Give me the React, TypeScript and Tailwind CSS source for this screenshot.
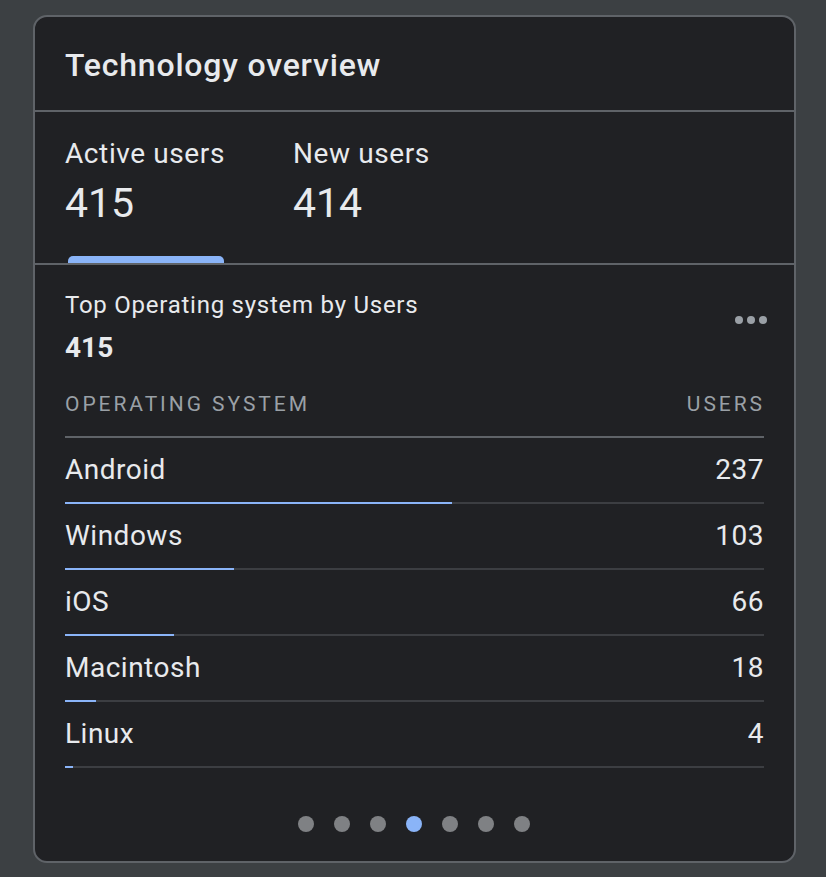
import { memo } from 'react';

const rows = [
    { name: 'Android', users: 237, pct: 55.3 },
    { name: 'Windows', users: 103, pct: 24.2 },
    { name: 'iOS', users: 66, pct: 15.6 },
    { name: 'Macintosh', users: 18, pct: 4.4 },
    { name: 'Linux', users: 4, pct: 1.1 },
];

const font = { fontFamily: 'Roboto, "Noto Sans", sans-serif' };

/**
 * One operating system row with its share bar underneath
 */
const OsRow = memo(function OsRow({ name, users, pct }: { name: string; users: number; pct: number }) {
    return (
        <div className="flex flex-col">
            <div className="flex h-[64px] items-center justify-between text-[28px] tracking-[0.5px] text-[#e8eaed]">
                <span>{name}</span>
                <span>{users}</span>
            </div>
            <div className="relative h-[2px] bg-[#3c3e42]">
                <div className="absolute left-0 top-0 h-[2px] bg-[#8ab4f8]" style={{ width: `${pct}%` }} />
            </div>
        </div>
    );
});

export default function App() {
    return (
        <div className="min-h-[877px] bg-[#3c4043] pl-[33px] pt-[15px]" style={font}>
            <div className="flex h-[848px] w-[763px] flex-col rounded-[14px] border-2 border-[#5f6368] bg-[#202124]">
                {/* Title */}
                <div className="flex h-[93px] items-center px-[30px] pt-[2px] text-[32px] font-medium tracking-[0.8px] text-[#e8eaed]">
                    Technology overview
                </div>
                <div className="h-[2px] bg-[#5f6368]" />

                {/* Metric tabs */}
                <div className="flex h-[151px] gap-[68px] px-[30px]">
                    <div className="flex flex-col">
                        <div className="pt-[25px] text-[28px] leading-[34px] tracking-[0.6px] text-[#e8eaed]">Active users</div>
                        <div className="pt-[10px] text-[41px] leading-[44px] text-[#e8eaed]">415</div>
                        <div className="mt-auto ml-[3px] h-[7px] w-[156px] rounded-t-[5px] bg-[#8ab4f8]" />
                    </div>
                    <div className="flex flex-col">
                        <div className="pt-[25px] text-[28px] leading-[34px] tracking-[0.6px] text-[#e8eaed]">New users</div>
                        <div className="pt-[10px] text-[41px] leading-[44px] text-[#e8eaed]">414</div>
                    </div>
                </div>
                <div className="h-[2px] bg-[#5f6368]" />

                {/* Operating system table */}
                <div className="flex flex-1 flex-col px-[30px]">
                    <div className="flex items-start justify-between">
                        <div className="flex flex-col pt-[26px]">
                            <div className="text-[24px] leading-[28px] tracking-[0.75px] text-[#e8eaed]">Top Operating system by Users</div>
                            <div className="pt-[14px] text-[28px] font-bold leading-[30px] text-[#e8eaed]">415</div>
                        </div>
                        <div className="mr-[-3px] mt-[51px] flex gap-[4px]">
                            <span className="h-[8px] w-[8px] rounded-full bg-[#9aa0a6]" />
                            <span className="h-[8px] w-[8px] rounded-full bg-[#9aa0a6]" />
                            <span className="h-[8px] w-[8px] rounded-full bg-[#9aa0a6]" />
                        </div>
                    </div>

                    <div className="mt-[29px] flex items-center justify-between pb-[20px] text-[21px] leading-[24px] tracking-[0.14em] text-[#9aa0a6]">
                        <span>OPERATING SYSTEM</span>
                        <span className="mr-[-1px]">USERS</span>
                    </div>
                    <div className="h-[2px] bg-[#5f6368]" />

                    {rows.map((r) => (
                        <OsRow key={r.name} {...r} />
                    ))}

                    {/* Pager dots */}
                    <div className="mt-[48px] flex justify-center gap-[20px] pr-[2px]">
                        {[0, 1, 2, 3, 4, 5, 6].map((i) => (
                            <span
                                key={i}
                                className={i === 3 ? 'h-[16px] w-[16px] rounded-full bg-[#8ab4f8]' : 'h-[16px] w-[16px] rounded-full bg-[#7f8184]'}
                            />
                        ))}
                    </div>
                </div>
            </div>
        </div>
    );
}
